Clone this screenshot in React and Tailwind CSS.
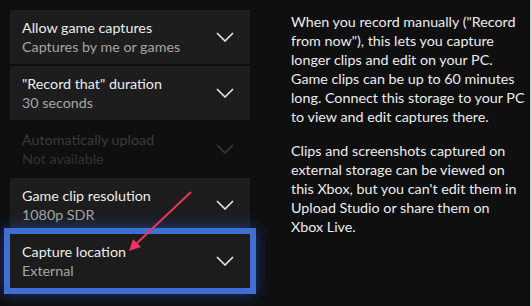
import React from 'react';

const Chevron = ({ dim }) => (
  <svg width="18" height="10" viewBox="0 0 18 10" className="shrink-0">
    <path d="M1 1 L9 9 L17 1" fill="none" stroke={dim ? '#3a3a3a' : '#e8e8e8'} strokeWidth="1.6" />
  </svg>
);

const settings = [
  { title: 'Allow game captures', value: 'Captures by me or games' },
  { title: '"Record that" duration', value: '30 seconds' },
  { title: 'Automatically upload', value: 'Not available', disabled: true },
  { title: 'Game clip resolution', value: '1080p SDR' },
  { title: 'Capture location', value: 'External', focused: true },
];

const Row = ({ item }) => {
  let cls = 'relative h-[54px] w-[240px] flex items-center justify-between pl-3 pr-3 ';
  if (item.disabled) cls += 'bg-transparent';
  else if (item.focused) cls += 'bg-[#1c1c1c] outline-[6px] outline-solid outline-[#3e6fd1] shadow-[0_0_14px_6px_rgba(40,90,220,0.55)]';
  else cls += 'bg-[#1d1d1d]';

  return (
    <div className={cls}>
      <div className="flex flex-col leading-[19px]">
        <span className={item.disabled ? 'text-[#3b3b3b]' : 'text-[#ececec]'}>{item.title}</span>
        <span className={item.disabled ? 'text-[#333333]' : 'text-[#a6a6a6]'}>{item.value}</span>
      </div>
      <div className="mr-1">
        <Chevron dim={item.disabled} />
      </div>
    </div>
  );
};

const para1 = [
  'When you record manually ("Record',
  'from now"), this lets you capture',
  'longer clips and edit on your PC.',
  'Game clips can be up to 60 minutes',
  'long. Connect this storage to your PC',
  'to view and edit captures there.',
];

const para2 = [
  'Clips and screenshots captured on',
  'external storage can be viewed on',
  "this Xbox, but you can't edit them in",
  'Upload Studio or share them on',
  'Xbox Live.',
];

export default function App() {
  return (
    <div
      className="relative w-[532px] h-[306px] bg-[#0f0f0f] flex overflow-hidden border-r-2 border-[#cfcfcf] text-[14.3px]"
      style={{ fontFamily: 'Lato, "Noto Sans", sans-serif' }}
    >
      <div className="pl-[10px] pt-[10px] flex flex-col gap-[2px]">
        {settings.map((s) => (
          <Row key={s.title} item={s} />
        ))}
      </div>

      <div className="pl-[41px] pt-[12px] text-[#ececec] leading-[19px]">
        <div className="flex flex-col">
          {para1.map((l) => (
            <span key={l} className="whitespace-nowrap">{l}</span>
          ))}
        </div>
        <div className="flex flex-col mt-[15px]">
          {para2.map((l) => (
            <span key={l} className="whitespace-nowrap">{l}</span>
          ))}
        </div>
      </div>

      <svg className="absolute left-0 top-0 pointer-events-none" width="532" height="306">
        <line x1="191" y1="192" x2="136" y2="244" stroke="#e8365f" strokeWidth="2" />
        <polygon points="129,251 133,239 141,247" fill="#e8365f" />
      </svg>
    </div>
  );
}
